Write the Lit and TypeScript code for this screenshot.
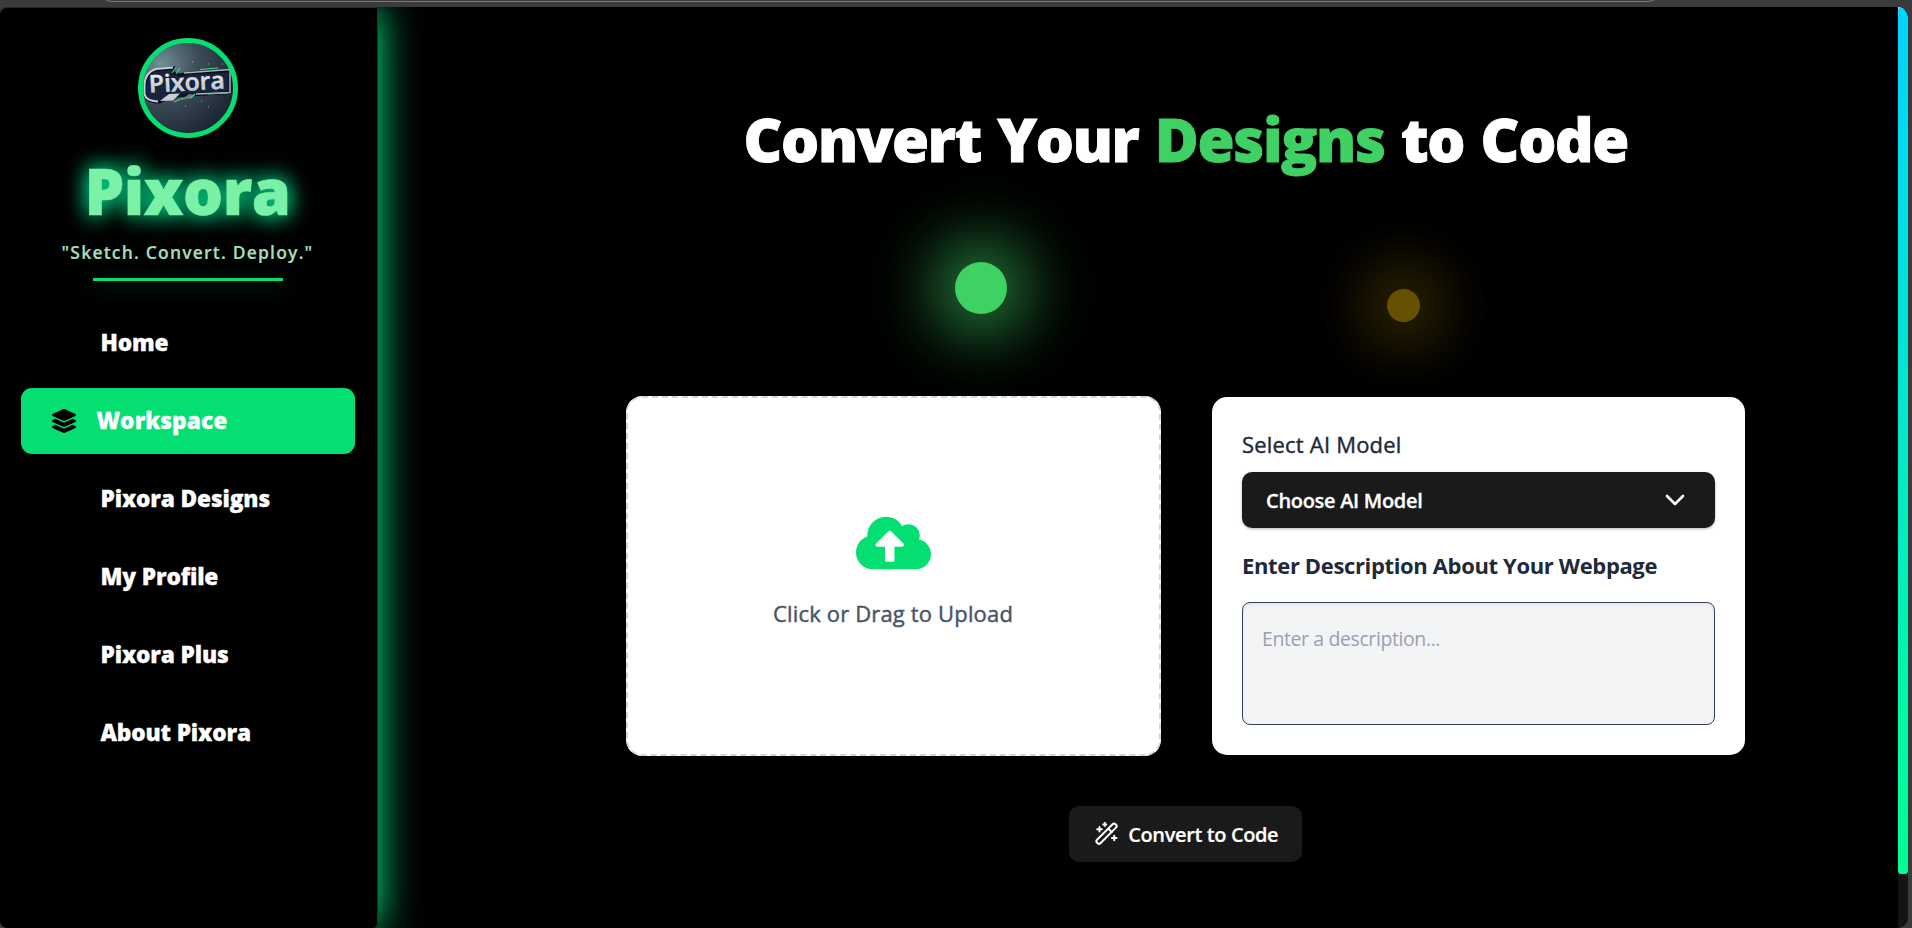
import { LitElement, html, css } from "lit";
import { customElement, property } from "lit/decorators.js";
import { classMap } from "lit/directives/class-map.js";

const layersIcon = html`<svg viewBox="0 0 512 512" fill="currentColor">
  <path d="M12.41 148.02l232.94 105.67c6.8 3.09 14.49 3.09 21.29 0l232.94-105.67c16.55-7.51 16.55-32.52 0-40.03L266.65 2.31a25.607 25.607 0 0 0-21.29 0L12.41 107.98c-16.55 7.51-16.55 32.53 0 40.04zm487.18 88.28l-58.09-26.33-161.64 73.27c-7.56 3.43-15.59 5.17-23.86 5.17s-16.29-1.74-23.86-5.17L70.51 209.97l-58.1 26.33c-16.55 7.5-16.55 32.5 0 40l232.94 105.59c6.8 3.08 14.49 3.08 21.29 0L499.59 276.3c16.55-7.5 16.55-32.5 0-40zm0 127.8l-57.87-26.23-161.86 73.37c-7.56 3.43-15.59 5.17-23.86 5.17s-16.29-1.74-23.86-5.17L70.29 337.87 12.41 364.1c-16.55 7.5-16.55 32.5 0 40l232.94 105.59c6.8 3.08 14.49 3.08 21.29 0L499.59 404.1c16.55-7.5 16.55-32.5 0-40z"/>
</svg>`;

const cloudIcon = html`<svg viewBox="0 0 640 512" fill="currentColor">
  <path d="M537.6 226.6c4.1-10.7 6.4-22.4 6.4-34.6 0-53-43-96-96-96-19.7 0-38.1 6-53.3 16.2C367 64.2 315.3 32 256 32c-88.4 0-160 71.6-160 160 0 2.7.1 5.4.2 8.1C40.2 219.8 0 273.2 0 336c0 79.5 64.5 144 144 144h368c70.7 0 128-57.3 128-128 0-61.9-44-113.6-102.4-125.4zM393.4 288H328v112c0 8.800-7.200 16-16 16h-48c-8.800 0-16-7.200-16-16V288h-65.400c-14.300 0-21.400-17.200-11.300-27.300l105.400-105.400c6.200-6.200 16.400-6.200 22.600 0l105.400 105.400c10.100 10.100 2.900 27.300-11.300 27.300z"/>
</svg>`;

const wandIcon = html`<svg viewBox="0 0 24 24" fill="none" stroke="currentColor" stroke-width="2" stroke-linecap="round">
  <rect x="-1.500" y="9.300" width="26" height="4.800" rx="2" transform="rotate(-45 11.500 11.700)"/>
  <path d="M13.500 6.800l3.200 3.200"/>
  <path d="M4.500 5v4.600M2.200 7.300h4.600M9.800 .9v3M8.300 2.400h3M19.200 13.700v4.600M16.900 16h4.600"/>
</svg>`;

const chevronIcon = html`<svg viewBox="0 0 20 12" fill="none" stroke="currentColor" stroke-width="2.600" stroke-linecap="round" stroke-linejoin="round">
  <path d="M2 2l8 8 8-8"/>
</svg>`;

@customElement("brand-badge")
class BrandBadge extends LitElement {
  static styles = css`
    :host { display: block; width: 100px; height: 100px; }
    svg { display: block; width: 100px; height: 100px; }
    .word { font: 600 24px "Open Sans", sans-serif; }
  `;
  render() {
    return html`<svg viewBox="0 0 100 100">
      <defs>
        <radialGradient id="bg" cx=".22" cy=".25" r=".85">
          <stop offset="0" stop-color="#6f8f98"/>
          <stop offset=".45" stop-color="#3d4d58"/>
          <stop offset="1" stop-color="#1c2431"/>
        </radialGradient>
        <linearGradient id="metal" x1="0" y1="0" x2="0" y2="1">
          <stop offset="0" stop-color="#fff"/>
          <stop offset="1" stop-color="#aab2bb"/>
        </linearGradient>
      </defs>
      <circle cx="50" cy="50" r="47.500" fill="url(#bg)"/>
      <path d="M36 30L18 32Q8 34 7 47V56Q8 64 22 64L34 58L92 54.500V33L52 35L42 37L35 35Z" fill="#18233f" stroke="#0b101b" stroke-width="3"/>
      <path d="M35 29.500L18 31Q7 34 6.500 47V56Q8 63 20 63.500" fill="none" stroke="#c6ccd3" stroke-width="2"/>
      <path d="M46 35l46-3.500v23l-34 1.500" fill="none" stroke="#a9b3bb" stroke-width="1.500"/>
      <path d="M22 63l9-7 11-.5-7 7z" fill="#c9ced5"/>
      <path d="M43 62l8-6 6 1-3 3z" fill="#727c89"/>
      <path d="M34 35l4-6M38 36l4-6M62 31.500l18-1.500M36 64l9-4M52 60l5-4M70 56l20-1" stroke="#36d98d" stroke-width="1.200" fill="none"/>
      <path d="M54 24h1M70 26h1M84 26h1M47 68h1M63 63h1M70 69h1M20 26h1" stroke="#6fc5a4"/>
      <text class="word" x="11" y="52.500" textLength="76" lengthAdjust="spacingAndGlyphs" transform="rotate(-3 50 50)" fill="url(#metal)" stroke="#eef1f4" stroke-width=".4">Pixora</text>
      <circle cx="50" cy="50" r="47.500" fill="none" stroke="#05df72" stroke-width="5"/>
    </svg>`;
  }
}

@customElement("nav-item")
class NavItem extends LitElement {
  @property() label = "";
  @property({ type: Boolean }) active = false;
  static styles = css`
    :host { display: block; }
    .item {
      display: flex; align-items: center; height: 66px; box-sizing: border-box;
      padding-left: 80px; border-radius: 11px; color: #fff;
      font: 800 22.700px/67px "Open Sans", sans-serif; letter-spacing: -0.150px; white-space: nowrap;
      -webkit-text-stroke: .3px currentColor;
    }
    .active { background: #05df72; padding-left: 31px; gap: 21px; letter-spacing: 0.050px; }
    svg { width: 24px; height: 24px; color: #000; }
  `;
  render() {
    return html`<div class=${classMap({ item: true, active: this.active })}>
      ${this.active ? layersIcon : ""}<span>${this.label}</span>
    </div>`;
  }
}

@customElement("app-root")
class AppRoot extends LitElement {
  static styles = css`
    :host {
      display: block; width: 1912px; height: 928px; overflow: hidden; background: #3b3b3b;
      font-family: "Open Sans", "Noto Sans", sans-serif;
    }
    * { box-sizing: border-box; }
    .chrome { height: 7px; overflow: hidden; padding-left: 97px; }
    .omnibox { width: 1566px; height: 30px; margin-top: -28px; border: 1px solid #77797b; border-radius: 15px; }
    .page { display: flex; height: 921px; width: 1908px; background: #000; border-radius: 7px 11px 11px 7px; overflow: hidden; }
    .sidebar {
      position: relative; z-index: 1; width: 378px; height: 921px; flex: none; background: #000;
      border-top: 1px solid #0b3a22; border-right: 1px solid #0b3a22; border-radius: 7px 0 5px 7px;
      box-shadow: 0 0 40px #00f890;
      display: flex; flex-direction: column; align-items: center; padding: 30px 2px 0 0;
    }
    .brand {
      margin-top: 17px; font-weight: 800; font-size: 63px; line-height: 72px; letter-spacing: -0.500px;
      color: #7bf1a8; text-shadow: 0 0 20px #00d98a, 0 0 24px #00a86b; -webkit-text-stroke: .6px currentColor;
    }
    .tagline { margin-top: 12.500px; font-weight: 600; font-size: 17.500px; line-height: 24px; letter-spacing: 1.200px; color: #a4dfbb; white-space: nowrap; -webkit-text-stroke: .2px currentColor; }
    .rule { width: 190px; height: 3px; margin-top: 14.500px; background: #05df72; box-shadow: 0 4px 20px rgba(5, 223, 114, .4); }
    nav { width: 334px; margin-top: 28.500px; display: flex; flex-direction: column; gap: 12px; }
    main { flex: 1; padding: 92px 153px 0 248.500px; position: relative; }
    h1 {
      margin: 0 0 217px; font-weight: 800; font-size: 60px; line-height: 80px; letter-spacing: -1.350px; word-spacing: 2.200px;
      color: #fff; text-align: center; white-space: nowrap; -webkit-text-stroke: .9px currentColor;
    }
    h1 span { color: #3fd163; }
    .dot { position: absolute; border-radius: 50%; }
    .green { left: 577px; top: 255px; width: 52px; height: 52px; background: #3fd163; box-shadow: 0 0 60px 14px #3fd16390, 0 0 90px 18px #3fd16360; }
    .amber { left: 1009px; top: 282px; width: 33px; height: 33px; background: #675100; box-shadow: 0 0 60px 14px #67510090, 0 0 80px 20px #67510060; }
    .cards { display: grid; grid-template-columns: 535px 533px; justify-content: space-between; position: relative; align-items: center; margin-left: -1px; }
    .upload {
      height: 360px; border: 2px dashed #d1d5dc; border-radius: 16px; background: #fff;
      display: flex; flex-direction: column; align-items: center; padding-top: 114.500px; color: #4a5565;
      font-size: 22px; line-height: 32px; letter-spacing: .160px; -webkit-text-stroke: .45px currentColor;
    }
    .upload svg { width: 75px; height: 60px; color: #05df72; margin-bottom: 24px; -webkit-text-stroke: 0; }
    .form { height: 358px; border-radius: 15px; background: #fff; padding: 31px 30px 0; color: #1e2939; }
    .label { font-size: 22px; line-height: 32px; letter-spacing: .2px; -webkit-text-stroke: .4px currentColor; }
    .select {
      height: 56px; margin-top: 12px; padding: 0 30px 0 24px; border-radius: 10px; background: #1a1a1a; color: #fff;
      display: flex; align-items: center; justify-content: space-between; box-shadow: 0 1px 3px rgba(0, 0, 0, .3);
      font-weight: 600; font-size: 20px; letter-spacing: -.300px; -webkit-text-stroke: .3px currentColor;
    }
    .select svg { width: 20px; height: 12px; }
    .bold { margin-top: 21px; font-weight: 700; font-size: 22px; line-height: 32px; letter-spacing: -.360px; white-space: nowrap; }
    .area {
      height: 123px; margin-top: 21px; border: 1px solid #364153; border-radius: 8px; background: #f3f4f6;
      box-shadow: inset 0 2px 4px rgba(0, 0, 0, .060); padding: 22px 19px; color: #99a1af;
      font-size: 19.500px; line-height: 28px; letter-spacing: -.400px;
    }
    .convert {
      margin: 50px auto 0; width: 233px; height: 56px; border: 0; border-radius: 10px; background: #1a1a1a; color: #fff;
      display: flex; align-items: center; gap: 9px; padding: 0 0 0 26px;
      font: 600 20px "Open Sans", sans-serif; letter-spacing: -.380px; white-space: nowrap; -webkit-text-stroke: .2px currentColor;
    }
    .convert svg { width: 24px; height: 24px; flex: none; }
    .track { width: 10px; flex: none; background: linear-gradient(#fff 0 3px, #141414 3px); }
    .thumb { height: 867px; border-radius: 5px 9px 5px 5px; background: linear-gradient(#00d4ff, #00ff94); }
  `;
  private links = ["Home", "Workspace", "Pixora Designs", "My Profile", "Pixora Plus", "About Pixora"];
  render() {
    return html`
      <div class="chrome"><div class="omnibox"></div></div>
      <div class="page">
        <aside class="sidebar">
          <brand-badge></brand-badge>
          <div class="brand">Pixora</div>
          <div class="tagline">"Sketch. Convert. Deploy."</div>
          <div class="rule"></div>
          <nav>${this.links.map((l) => html`<nav-item .label=${l} .active=${l === "Workspace"}></nav-item>`)}</nav>
        </aside>
        <main>
          <div class="dot green"></div>
          <div class="dot amber"></div>
          <h1>Convert Your <span>Designs</span> to Code</h1>
          <section class="cards">
            <div class="upload">${cloudIcon}<span>Click or Drag to Upload</span></div>
            <div class="form">
              <div class="label">Select AI Model</div>
              <div class="select"><span>Choose AI Model</span>${chevronIcon}</div>
              <div class="bold">Enter Description About Your Webpage</div>
              <div class="area">Enter a description...</div>
            </div>
          </section>
          <button class="convert">${wandIcon}<span>Convert to Code</span></button>
        </main>
        <div class="track"><div class="thumb"></div></div>
      </div>`;
  }
}
